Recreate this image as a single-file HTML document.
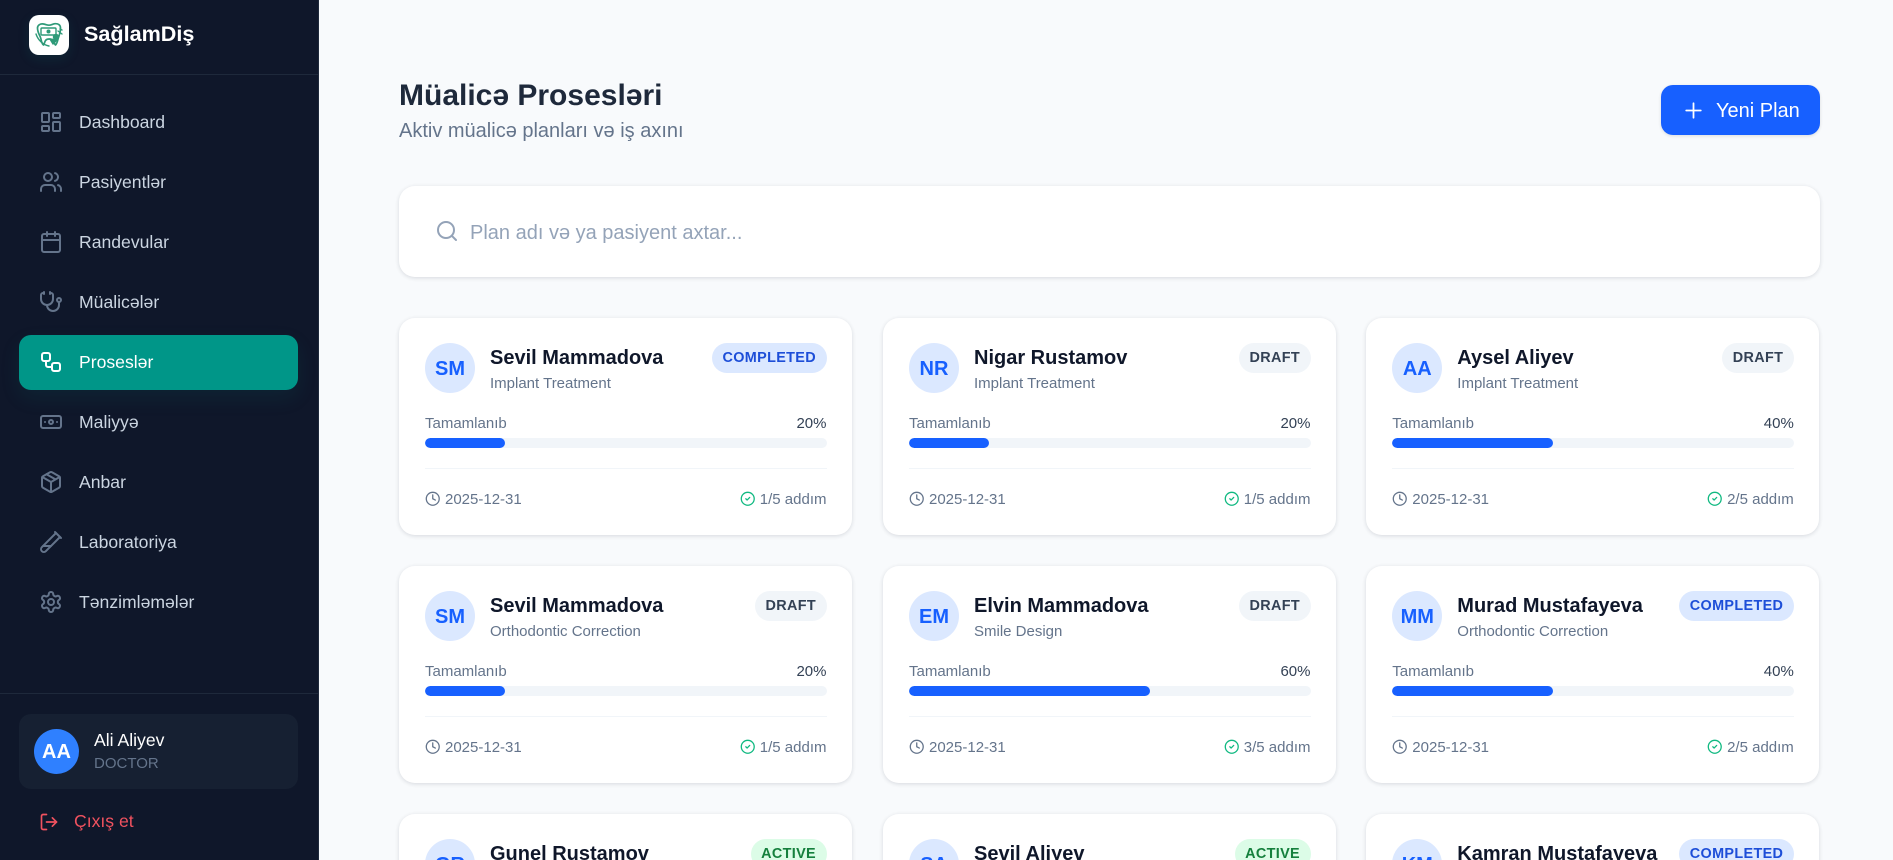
<!DOCTYPE html>
<html lang="az">
<head>
<meta charset="utf-8">
<title>Müalicə Prosesləri</title>
<style>
*{box-sizing:border-box;margin:0;padding:0}
html,body{width:1893px;height:860px;overflow:hidden;background:#f8fafc;font-family:"Liberation Sans",sans-serif}
.abs,.side,.side>*,.card>*,.main>*{position:absolute}
.side{left:0;top:0;width:319px;height:860px;background:#0f172a;border-right:1px solid #1e293b}
svg{fill:none;stroke:currentColor;stroke-width:2;stroke-linecap:round;stroke-linejoin:round;display:block}
.logo{left:29px;top:15px;width:40px;height:40px;border-radius:10px;background:#fff;box-shadow:0 4px 12px rgba(0,150,136,.12)}
.brand{left:84px;top:21px;font-size:21.6px;line-height:26px;font-weight:700;color:#fff}
.hr{left:0;width:318px;height:1px;background:#1e293b}
.nav{left:19px;width:279px;height:55px;border-radius:12px;color:#cbd5e1;font-size:17.6px;line-height:55px;padding-left:60px}
.nav svg{position:absolute;left:20px;top:15px;width:24px;height:24px;color:#64748b}
.nav.on{background:#009688;color:#fff;box-shadow:0 8px 20px rgba(0,150,136,.10);line-height:54px}
.nav.on svg{color:#fff}
.ubox{left:19px;top:714px;width:279px;height:75px;border-radius:12px;background:#162032}
.uav{left:34px;top:729px;width:45px;height:45px;border-radius:50%;background:#2f80ff;color:#fff;font-weight:700;font-size:20px;line-height:47px;text-align:center}
.uname{left:94px;top:730px;font-size:17.6px;line-height:21px;color:#fff}
.urole{left:94px;top:755px;font-size:15px;line-height:18px;color:#64748b}
.out{left:74px;top:810px;font-size:17.6px;line-height:22px;color:#f0525f}
.outi{left:39px;top:811.500px;width:20px;height:20px;color:#f0525f}
.main{position:absolute;left:320px;top:0;width:1573px;height:860px;overflow:hidden}
.ttl{left:79px;top:77px;font-size:30px;line-height:38px;font-weight:700;color:#1e293b}
.sub{left:79px;top:119px;font-size:20px;line-height:24px;color:#64748b}
.btn{left:1341px;top:85px;width:159px;height:50px;border-radius:12px;background:#1760ff;color:#fff;font-size:20px;line-height:52px;padding-left:55px;box-shadow:0 1px 3px rgba(0,0,0,.12)}
.btn svg{position:absolute;left:20px;top:12.500px;width:25px;height:25px;stroke-width:1.700}
.search{left:79px;top:186px;width:1421px;height:91px;border-radius:16px;background:#fff;box-shadow:0 1px 4px rgba(15,23,42,.14)}
.search svg{position:absolute;left:36px;top:33px;width:24px;height:24px;color:#94a3b8}
.search span{position:absolute;left:71px;top:35px;font-size:20px;line-height:24px;color:#94a3b8}
.card{width:453px;height:217px;border-radius:16px;background:#fff;box-shadow:0 1px 4px rgba(15,23,42,.14)}
.av{left:26px;top:25px;width:50px;height:50px;border-radius:50%;background:#dbe8ff;color:#1760ff;font-weight:700;font-size:20px;line-height:52px;text-align:center}
.nm{left:91px;top:27px;font-size:20px;line-height:26px;font-weight:700;color:#0f172a;white-space:nowrap}
.tp{left:91px;top:57px;font-size:15px;line-height:18px;color:#64748b;white-space:nowrap}
.chip{right:25.500px;top:25px;height:30px;border-radius:15px;padding:0 10.500px;font-size:14.400px;line-height:30px;font-weight:700;letter-spacing:.35px;white-space:nowrap}
.c{background:#dbe8ff;color:#1d4ed8}
.d{background:#f1f5f9;color:#334155}
.a{background:#dcfce7;color:#15803d}
.lb{left:26px;top:97px;font-size:15px;line-height:18px;color:#64748b}
.pc{right:25.500px;top:97px;font-size:15px;line-height:18px;color:#334155}
.tr{left:26px;right:25.500px;top:120px;height:10px;border-radius:5px;background:#f1f5f9;overflow:hidden}
.tr i{display:block;height:10px;border-radius:5px;background:#1760ff}
.dv{left:26px;right:25.500px;top:150px;height:1px;background:#f1f5f9}
.ck{left:25.700px;top:173px;width:15.500px;height:15.500px;color:#64748b}
.dt{left:46px;top:173px;font-size:15px;line-height:18px;color:#64748b}
.st{right:25.500px;top:173px;font-size:15px;line-height:18px;color:#64748b}
.ok{right:97px;top:173px;width:15.500px;height:15.500px;color:#10b981}
</style>
</head>
<body>
<svg width="0" height="0" style="position:absolute">
<symbol id="clock" viewBox="0 0 24 24"><circle cx="12" cy="12" r="10"/><path d="M12 6v6l4 2"/></symbol>
<symbol id="check" viewBox="0 0 24 24"><circle cx="12" cy="12" r="10"/><path d="m9 12 2 2 4-4"/></symbol>
</svg>

<div class="side">
<div class="logo"><svg viewBox="0 0 40 40" width="40" height="40" style="color:#2e9a78;stroke-width:1.400"><path d="M8.500 13c0-3 3-4.500 6-4 2.500.4 3.500 1.200 5.500 1.200s3.500-1.200 6-1.500c3-.2 5.500 1 5.500 4.300 0 4-1 6.500-2 9.500-1 3-1.200 6-3 7.500-1.500-1-1.500-6-6.500-6s-4 5-5.500 6c-2-1.500-2-4.500-3-7.500-1-3-3-5-3-9.500z" stroke-width="1.700"/><rect x="12" y="13" width="15" height="7" rx="1"/><circle cx="19.500" cy="16.500" r="2" fill="#2e9a78" stroke="none"/><path d="M21 24l3 5 4-4z" fill="#2e9a78"/><circle cx="27" cy="22" r="2.500" fill="#2e9a78"/><path d="M7 19c2 6 7 11 13 12M29 16l4 3M31 14l2 1"/></svg></div>
<div class="brand">SağlamDiş</div>
<div class="hr" style="top:74px"></div>

<div class="nav" style="top:95px"><svg viewBox="0 0 24 24"><rect x="3" y="3" width="7" height="9" rx="1"/><rect x="14" y="3" width="7" height="5" rx="1"/><rect x="14" y="12" width="7" height="9" rx="1"/><rect x="3" y="16" width="7" height="5" rx="1"/></svg>Dashboard</div>
<div class="nav" style="top:155px"><svg viewBox="0 0 24 24"><path d="M16 21v-2a4 4 0 0 0-4-4H6a4 4 0 0 0-4 4v2"/><circle cx="9" cy="7" r="4"/><path d="M22 21v-2a4 4 0 0 0-3-3.870"/><path d="M16 3.130a4 4 0 0 1 0 7.750"/></svg>Pasiyentlər</div>
<div class="nav" style="top:215px"><svg viewBox="0 0 24 24"><path d="M8 2v4M16 2v4"/><rect x="3" y="4" width="18" height="18" rx="2"/><path d="M3 10h18"/></svg>Randevular</div>
<div class="nav" style="top:275px"><svg viewBox="0 0 24 24"><path d="M11 2v2M5 2v2M5 3H4a2 2 0 0 0-2 2v4a6 6 0 0 0 12 0V5a2 2 0 0 0-2-2h-1"/><path d="M8 15a6 6 0 0 0 12 0v-3"/><circle cx="20" cy="10" r="2"/></svg>Müalicələr</div>
<div class="nav on" style="top:335px"><svg viewBox="0 0 24 24"><rect x="3" y="3" width="8" height="8" rx="2"/><path d="M7 11v4a2 2 0 0 0 2 2h4"/><rect x="13" y="13" width="8" height="8" rx="2"/></svg>Proseslər</div>
<div class="nav" style="top:395px"><svg viewBox="0 0 24 24"><rect x="2" y="6" width="20" height="12" rx="2"/><circle cx="12" cy="12" r="2"/><path d="M6 12h.01M18 12h.01"/></svg>Maliyyə</div>
<div class="nav" style="top:455px"><svg viewBox="0 0 24 24"><path d="M11 21.730a2 2 0 0 0 2 0l7-4A2 2 0 0 0 21 16V8a2 2 0 0 0-1-1.730l-7-4a2 2 0 0 0-2 0l-7 4A2 2 0 0 0 3 8v8a2 2 0 0 0 1 1.730z"/><path d="M12 22V12"/><path d="M3.290 7 12 12l8.710-5"/><path d="m7.500 4.270 9 5.150"/></svg>Anbar</div>
<div class="nav" style="top:515px"><svg viewBox="0 0 24 24"><path d="M21 7 6.820 21.180a2.830 2.830 0 0 1-3.990-.010a2.830 2.830 0 0 1 0-4L17 3"/><path d="m16 2 6 6"/><path d="M12 16H4"/></svg>Laboratoriya</div>
<div class="nav" style="top:575px"><svg viewBox="0 0 24 24"><path d="M12.220 2h-.44a2 2 0 0 0-2 2v.18a2 2 0 0 1-1 1.730l-.43.25a2 2 0 0 1-2 0l-.15-.08a2 2 0 0 0-2.730.73l-.22.38a2 2 0 0 0 .73 2.730l.15.1a2 2 0 0 1 1 1.720v.51a2 2 0 0 1-1 1.740l-.15.09a2 2 0 0 0-.73 2.730l.22.38a2 2 0 0 0 2.730.73l.15-.08a2 2 0 0 1 2 0l.43.25a2 2 0 0 1 1 1.730V20a2 2 0 0 0 2 2h.44a2 2 0 0 0 2-2v-.18a2 2 0 0 1 1-1.730l.43-.25a2 2 0 0 1 2 0l.15.08a2 2 0 0 0 2.730-.73l.22-.39a2 2 0 0 0-.73-2.730l-.15-.08a2 2 0 0 1-1-1.740v-.5a2 2 0 0 1 1-1.740l.15-.09a2 2 0 0 0 .73-2.730l-.22-.38a2 2 0 0 0-2.730-.73l-.15.08a2 2 0 0 1-2 0l-.43-.25a2 2 0 0 1-1-1.730V4a2 2 0 0 0-2-2z"/><circle cx="12" cy="12" r="3"/></svg>Tənzimləmələr</div>

<div class="hr" style="top:693px"></div>
<div class="ubox"></div>
<div class="uav">AA</div>
<div class="uname">Ali Aliyev</div>
<div class="urole">DOCTOR</div>
<svg class="outi" viewBox="0 0 24 24"><path d="M9 21H5a2 2 0 0 1-2-2V5a2 2 0 0 1 2-2h4"/><path d="m16 17 5-5-5-5"/><path d="M21 12H9"/></svg>
<div class="out">Çıxış et</div>
</div>

<div class="main">
<div class="ttl">Müalicə Prosesləri</div>
<div class="sub">Aktiv müalicə planları və iş axını</div>
<div class="btn"><svg viewBox="0 0 24 24"><path d="M5 12h14M12 5v14"/></svg>Yeni Plan</div>
<div class="search"><svg viewBox="0 0 24 24"><circle cx="11" cy="11" r="8"/><path d="m21 21-4.300-4.300"/></svg><span>Plan adı və ya pasiyent axtar...</span></div>

<div class="card" style="left:79px;top:318px"><div class="av">SM</div><div class="nm">Sevil Mammadova</div><div class="tp">Implant Treatment</div><div class="chip c">COMPLETED</div><div class="lb">Tamamlanıb</div><div class="pc">20%</div><div class="tr"><i style="width:20%"></i></div><div class="dv"></div><svg class="ck"><use href="#clock"/></svg><div class="dt">2025-12-31</div><svg class="ok"><use href="#check"/></svg><div class="st">1/5 addım</div></div>
<div class="card" style="left:563px;top:318px"><div class="av">NR</div><div class="nm">Nigar Rustamov</div><div class="tp">Implant Treatment</div><div class="chip d">DRAFT</div><div class="lb">Tamamlanıb</div><div class="pc">20%</div><div class="tr"><i style="width:20%"></i></div><div class="dv"></div><svg class="ck"><use href="#clock"/></svg><div class="dt">2025-12-31</div><svg class="ok"><use href="#check"/></svg><div class="st">1/5 addım</div></div>
<div class="card" style="left:1046.300px;top:318px"><div class="av">AA</div><div class="nm">Aysel Aliyev</div><div class="tp">Implant Treatment</div><div class="chip d">DRAFT</div><div class="lb">Tamamlanıb</div><div class="pc">40%</div><div class="tr"><i style="width:40%"></i></div><div class="dv"></div><svg class="ck"><use href="#clock"/></svg><div class="dt">2025-12-31</div><svg class="ok"><use href="#check"/></svg><div class="st">2/5 addım</div></div>

<div class="card" style="left:79px;top:566px"><div class="av">SM</div><div class="nm">Sevil Mammadova</div><div class="tp">Orthodontic Correction</div><div class="chip d">DRAFT</div><div class="lb">Tamamlanıb</div><div class="pc">20%</div><div class="tr"><i style="width:20%"></i></div><div class="dv"></div><svg class="ck"><use href="#clock"/></svg><div class="dt">2025-12-31</div><svg class="ok"><use href="#check"/></svg><div class="st">1/5 addım</div></div>
<div class="card" style="left:563px;top:566px"><div class="av">EM</div><div class="nm">Elvin Mammadova</div><div class="tp">Smile Design</div><div class="chip d">DRAFT</div><div class="lb">Tamamlanıb</div><div class="pc">60%</div><div class="tr"><i style="width:60%"></i></div><div class="dv"></div><svg class="ck"><use href="#clock"/></svg><div class="dt">2025-12-31</div><svg class="ok"><use href="#check"/></svg><div class="st">3/5 addım</div></div>
<div class="card" style="left:1046.300px;top:566px"><div class="av">MM</div><div class="nm">Murad Mustafayeva</div><div class="tp">Orthodontic Correction</div><div class="chip c">COMPLETED</div><div class="lb">Tamamlanıb</div><div class="pc">40%</div><div class="tr"><i style="width:40%"></i></div><div class="dv"></div><svg class="ck"><use href="#clock"/></svg><div class="dt">2025-12-31</div><svg class="ok"><use href="#check"/></svg><div class="st">2/5 addım</div></div>

<div class="card" style="left:79px;top:813.500px"><div class="av">GR</div><div class="nm">Gunel Rustamov</div><div class="chip a">ACTIVE</div></div>
<div class="card" style="left:563px;top:813.500px"><div class="av">SA</div><div class="nm">Sevil Aliyev</div><div class="chip a">ACTIVE</div></div>
<div class="card" style="left:1046.300px;top:813.500px"><div class="av">KM</div><div class="nm">Kamran Mustafayeva</div><div class="chip c">COMPLETED</div></div>
</div>
</body>
</html>
